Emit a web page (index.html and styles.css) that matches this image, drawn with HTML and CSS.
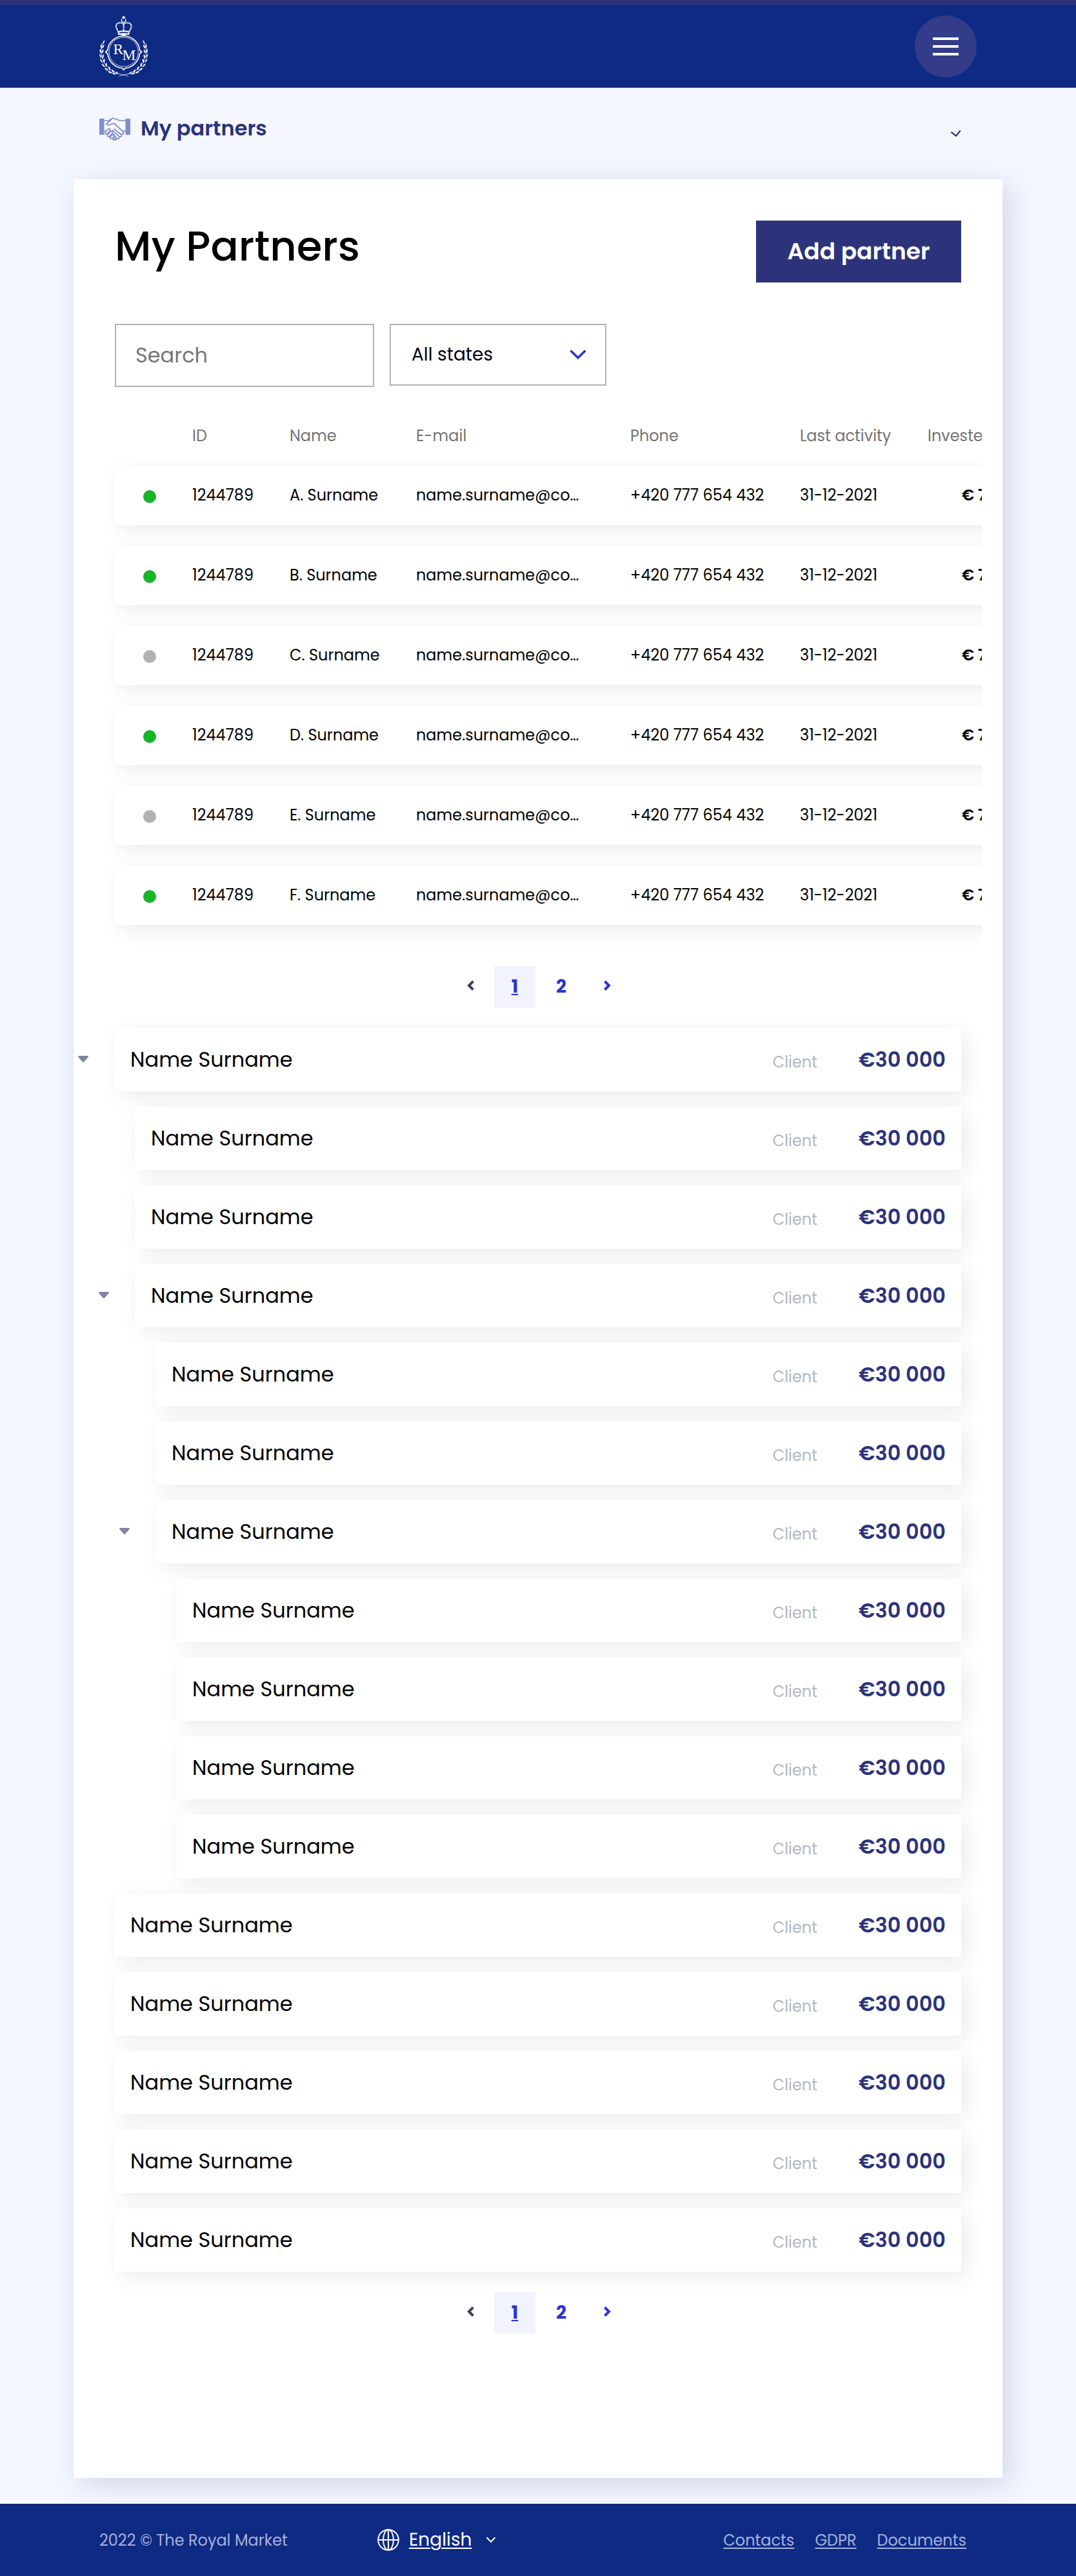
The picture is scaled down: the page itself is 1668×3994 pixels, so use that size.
FILE: index.html
```
<!DOCTYPE html>
<html lang="en">
<head>
<meta charset="utf-8">
<title>My Partners</title>
<link rel="stylesheet" href="styles.css">
</head>
<body>
<svg width="0" height="0" class="defs">
  <symbol id="prev" viewBox="0 0 12 18"><path d="M9.500 2.500 3 9l6.500 6.500" fill="none" stroke="currentColor" stroke-width="4"/></symbol>
  <symbol id="next" viewBox="0 0 12 18"><path d="M2.500 2.500 9 9l-6.500 6.500" fill="none" stroke="currentColor" stroke-width="4"/></symbol>
  <symbol id="caret" viewBox="0 0 16 10"><path d="M1.500 0h13c1.300 0 1.900 1.300 1 2.300L9.200 9.300c-.7.8-1.700.8-2.400 0L.5 2.300C-.4 1.300.2 0 1.500 0z" fill="#8184a0"/></symbol>
</svg>

<header class="header">
  <svg class="logo" viewBox="0 0 76 96" fill="none" stroke="#fff">
    <path d="M37.700 0l1 2h2.200l-1.700 1.500.6 2.200-2.100-1.200-2.100 1.200.6-2.200L34.500 2h2.200z" fill="#fff" stroke="none"/>
    <path d="M34.900 5.500a3.300 3.300 0 1 0 5.600 0" stroke-width="1.200"/>
    <path d="M30 28c-1-6-4.500-7-4-12 .5-5.500 8-6 11.700-2.500C41.400 10 49 10.500 49.500 16c.4 5-3 6-4 12M37.700 13v13" stroke-width="2.200" stroke-dasharray="1.300 .5"/>
    <path d="M29.500 25.500q8.200-2.500 16.400 0M29 29.300q8.700-2.300 17.400 0" stroke-width="2"/>
    <path d="M31 28.500h13.500L37.700 32z" fill="#fff" stroke="none"/>
    <path d="M37.700 31.500C25 32 13.500 42 13 53.500L9.700 56.500 13 59.500c1 12 12 21.500 22 22l2.700 2.700 2.700-2.700c10-.5 21-10 22-22l3.300-3-3.300-3C62 42 50.500 32 37.700 31.500z" stroke-width="1.700"/>
    <circle cx="37.700" cy="56.500" r="22.600" stroke-width=".8"/>
    <g class="monogram"><text x="21.500" y="59.500">R</text><text x="35.500" y="69.300">M</text></g>
    <g id="branch">
      <path d="M6.500 40C1 53 2 66 10 77c5.500 7 14 12 25 14.500l10 2.500" stroke-width=".7"/>
      <g stroke="none" fill="#fff">
        <path d="M8.500 38q-1 5-3.500 6.500Q5 40 8.500 38zM3 44q2 3 0 7.500Q.8 47 3 44zM7.500 45q0 4.500-3.300 6.500Q4 47 7.500 45zM1.200 51.500q2.500 3 1.200 7Q-.6 56 1.200 51.500zM6.500 52.500q.6 4.500-2.800 6.500-.6-4.500 2.800-6.500zM.4 59q3 2.500 2.400 7Q-.4 63.500.4 59zM6.600 60q1.100 4.500-2 7-1.200-4.500 2-7zM1.200 67q3.600 2.200 3.800 6.300Q1.300 71.500 1.200 67zM7.900 66.800q1.700 4.200-1 7.200-2-4.200 1-7.200zM3.600 74.500q4 1.300 5.200 5.500-4.500-1.300-5.200-5.500zM10.600 73q2.300 3.700.3 7.200-2.700-3.400-.3-7.200zM8 81.300q4.300.4 6.300 4.200-4.700.3-6.300-4.200zM14.800 78.500q3 3 1.600 7-3.200-3-1.600-7zM13 86.500q4.500-.7 7.300 2.400-4.500 1.700-7.300-2.400zM19.600 83.200q3.600 2.200 3 6.300-3.700-2-3-6.300zM19.500 90q4-1.700 7.500.6-3.500 2-7.500-.6zM25 86.800q4 1.300 4.500 4.500-3.700-1-4.500-4.500z"/>
      </g>
    </g>
    <use href="#branch" transform="matrix(-1 0 0 1 75.400 0)"/>
  </svg>
  <button class="menu-button" aria-label="Menu"><span></span><span></span><span></span></button>
</header>

<nav class="section-nav">
  <svg class="handshake" viewBox="0 0 48 36" fill="none" stroke="#808fc7" stroke-width="1.700" stroke-linejoin="round" stroke-linecap="round">
    <path d="M0 2h7.500v25H0zM40.500 2H48v25h-7.500z" fill="#808fc7" stroke="none"/>
    <path d="M7 5h7.500L21 1l11 4h9M19 2.800 11 10c1.500 2.500 4 2.300 6 1l5.500-2 14.800 13.500c1.500 2-.8 4.200-2.800 2.700M7 21h3M41 21h-3.500M23 18l11 9c1.600 2-.8 4.300-2.800 2.800L20 20M31 30c1 2-1.500 3.800-3.500 2.500l-6-5M27 33c0 2-2.500 2.500-4 1"/>
    <path d="M9.500 23l4-5c2-1.300 4.300.3 3 2.500l-4 5c-2 1.600-4.300-.3-3-2.500zM13 27l4-5c2-1.400 4.300.2 3 2.500l-4 5c-2 1.500-4.300-.2-3-2.500zM17 30.500l3.300-4c2-1.300 4 .4 3 2.500l-3.300 3.700c-2 1.300-4-.2-3-2.200zM21 33l2-2.300c2-1 3.500.4 2.600 2.100l-1.300 1.700c-1.500 1.300-3.800.2-3.300-1.500z"/>
  </svg>
  <span class="section-name">My partners</span>
  <svg class="section-chevron" viewBox="0 0 17 12"><path d="M2 4.200 9.200 9.700 15.200 2" fill="none" stroke="#2b337b" stroke-width="2.200" stroke-linecap="round"/></svg>
</nav>

<main class="card">
  <div class="card-head">
    <h1>My Partners</h1>
    <button class="add-button">Add partner</button>
  </div>
  <div class="filters">
    <div class="search">Search</div>
    <div class="select"><span>All states</span><svg width="26" height="16" viewBox="0 0 26 16"><path d="M2.500 2.500 13 12.800 23.500 2.500" fill="none" stroke="#2933d3" stroke-width="3.500" stroke-linecap="round"/></svg></div>
  </div>

  <div class="table-scroll">
    <div class="grid table-head"><span></span><span>ID</span><span>Name</span><span>E-mail</span><span>Phone</span><span>Last activity</span><span>Invested</span></div>
    <div class="grid row"><i class="dot"></i><span>1244789</span><span>A. Surname</span><span>name.surname@co…</span><span>+420 777 654 432</span><span>31-12-2021</span><b>€ 7 000</b></div>
    <div class="grid row"><i class="dot"></i><span>1244789</span><span>B. Surname</span><span>name.surname@co…</span><span>+420 777 654 432</span><span>31-12-2021</span><b>€ 7 000</b></div>
    <div class="grid row"><i class="dot off"></i><span>1244789</span><span>C. Surname</span><span>name.surname@co…</span><span>+420 777 654 432</span><span>31-12-2021</span><b>€ 7 000</b></div>
    <div class="grid row"><i class="dot"></i><span>1244789</span><span>D. Surname</span><span>name.surname@co…</span><span>+420 777 654 432</span><span>31-12-2021</span><b>€ 7 000</b></div>
    <div class="grid row"><i class="dot off"></i><span>1244789</span><span>E. Surname</span><span>name.surname@co…</span><span>+420 777 654 432</span><span>31-12-2021</span><b>€ 7 000</b></div>
    <div class="grid row"><i class="dot"></i><span>1244789</span><span>F. Surname</span><span>name.surname@co…</span><span>+420 777 654 432</span><span>31-12-2021</span><b>€ 7 000</b></div>
  </div>

  <div class="pager"><a class="prev"><svg><use href="#prev"/></svg></a><a class="current">1</a><a>2</a><a class="next"><svg><use href="#next"/></svg></a></div>

  <div class="tree">
    <div class="node"><svg class="caret"><use href="#caret"/></svg><span>Name Surname</span><small>Client</small><b>€30 000</b></div>
    <div class="node l1"><span>Name Surname</span><small>Client</small><b>€30 000</b></div>
    <div class="node l1"><span>Name Surname</span><small>Client</small><b>€30 000</b></div>
    <div class="node l1"><svg class="caret"><use href="#caret"/></svg><span>Name Surname</span><small>Client</small><b>€30 000</b></div>
    <div class="node l2"><span>Name Surname</span><small>Client</small><b>€30 000</b></div>
    <div class="node l2"><span>Name Surname</span><small>Client</small><b>€30 000</b></div>
    <div class="node l2"><svg class="caret"><use href="#caret"/></svg><span>Name Surname</span><small>Client</small><b>€30 000</b></div>
    <div class="node l3"><span>Name Surname</span><small>Client</small><b>€30 000</b></div>
    <div class="node l3"><span>Name Surname</span><small>Client</small><b>€30 000</b></div>
    <div class="node l3"><span>Name Surname</span><small>Client</small><b>€30 000</b></div>
    <div class="node l3"><span>Name Surname</span><small>Client</small><b>€30 000</b></div>
    <div class="node"><span>Name Surname</span><small>Client</small><b>€30 000</b></div>
    <div class="node"><span>Name Surname</span><small>Client</small><b>€30 000</b></div>
    <div class="node"><span>Name Surname</span><small>Client</small><b>€30 000</b></div>
    <div class="node"><span>Name Surname</span><small>Client</small><b>€30 000</b></div>
    <div class="node"><span>Name Surname</span><small>Client</small><b>€30 000</b></div>
  </div>

  <div class="pager"><a class="prev"><svg><use href="#prev"/></svg></a><a class="current">1</a><a>2</a><a class="next"><svg><use href="#next"/></svg></a></div>
</main>

<footer class="footer">
  <span class="copyright">2022 © The Royal Market</span>
  <div class="language">
    <svg width="34" height="34" viewBox="0 0 34 34" fill="none" stroke="#fff" stroke-width="2"><circle cx="17" cy="17" r="15.800"/><ellipse cx="17" cy="17" rx="8" ry="15.800"/><path d="M17 1v32M1 17h32"/></svg>
    <a>English</a>
    <svg width="16" height="10" viewBox="0 0 16 10"><path d="M1.500 1.300 8 8l6.500-6.700" fill="none" stroke="#fff" stroke-width="2"/></svg>
  </div>
  <div class="links"><a>Contacts</a><a>GDPR</a><a>Documents</a></div>
</footer>
</body>
</html>
```
FILE: styles.css
```
* { box-sizing: border-box; }

body {
  margin: 0;
  background: #f4f7ff;
  color: #000;
  font-family: Poppins, Inter, "Liberation Sans", sans-serif;
  font-size: 24px;
}

.defs { display: block; }

/* Header */
.header {
  height: 136px;
  border-top: 8px solid #2d337b;
  background: #0f2a83;
  padding: 0 154px;
  display: flex;
  align-items: center;
  justify-content: space-between;
}
.logo { width: 76px; height: 96px; overflow: visible; }
.monogram text { font: 23.500px "Liberation Serif", serif; fill: #fff; stroke: none; }
.menu-button {
  width: 96px;
  height: 96px;
  border: 0;
  border-radius: 50%;
  background: #333c88;
  display: flex;
  flex-direction: column;
  align-items: center;
  justify-content: center;
  gap: 8px;
}
.menu-button span { width: 40px; height: 4px; background: #fff; }

/* Section bar */
.section-nav {
  height: 142px;
  padding: 43px 178px 0 154px;
  display: flex;
  align-items: flex-start;
}
.handshake { width: 48px; height: 36px; margin-top: 3px; }
.section-name {
  flex: 1;
  margin-left: 16px;
  font-size: 32px;
  font-weight: 600;
  line-height: 40px;
  color: #2b337b;
}
.section-chevron { width: 17px; height: 12px; margin-top: 22px; }

/* Card */
.card {
  width: 1440px;
  margin: 0 0 40px 114px;
  padding: 64px 64px 224px;
  background: #fff;
  box-shadow: 10px 10px 40px rgba(43, 51, 110, .17);
}
.card-head {
  display: flex;
  justify-content: space-between;
  align-items: flex-start;
  height: 96px;
  margin-bottom: 64px;
}
h1 {
  margin: 0;
  font-size: 64px;
  font-weight: 500;
  line-height: 80px;
}
.add-button {
  width: 318px;
  height: 96px;
  padding: 0 0 2px;
  border: 0;
  background: #2d337b;
  color: #fff;
  font: inherit;
  font-size: 36px;
  font-weight: 600;
}
.filters { display: flex; align-items: flex-start; gap: 24px; }
.search, .select {
  border: 2px solid #b2b2b2;
  display: flex;
  align-items: center;
}
.search {
  width: 402px;
  height: 98px;
  padding-left: 30px;
  font-size: 32px;
  color: #757575;
}
.select {
  width: 336px;
  height: 96px;
  padding: 0 29px 0 32px;
  justify-content: space-between;
  font-size: 28px;
  color: #000012;
}

/* Partner table, cut off at its right edge */
.table-scroll {
  margin: 0 -32px 0 -64px;
  padding: 55px 0 48px 64px;
  overflow: hidden;
}
.grid {
  display: grid;
  grid-template-columns: 120px 151px 196px 332px 263px 198px 200px;
  align-items: center;
  width: 1560px;
  white-space: nowrap;
}
.table-head { height: 40px; margin-bottom: 27px; color: #737373; }
.row {
  height: 92px;
  padding-bottom: 2px;
  background: #fff;
  box-shadow: 8px 8px 30px rgba(0, 0, 0, .08);
}
.row + .row { margin-top: 32px; }
.row b { padding-left: 53px; font-weight: 600; }
.dot {
  width: 20px;
  height: 20px;
  margin: 6px 0 0 44px;
  border-radius: 50%;
  background: #17b42a;
}
.dot.off { background: #b2b2b2; }

/* Pagination */
.pager {
  display: flex;
  justify-content: center;
  gap: 8px;
  margin: 16px 0 32px;
}
.pager a {
  width: 64px;
  height: 64px;
  display: flex;
  align-items: center;
  justify-content: center;
  font-size: 28px;
  font-weight: 700;
  color: #2933d3;
}
.pager .current {
  background: #f1f3fe;
  text-decoration: underline;
  text-decoration-thickness: 2px;
  text-underline-offset: 2px;
}
.pager svg { width: 12px; height: 18px; margin-bottom: 4px; }
.pager .prev { color: #3c3f61; padding-left: 8px; }
.pager .next { padding-right: 2px; }
.tree + .pager { margin: 32px 0 0; }

/* Partner tree */
.tree { display: flex; flex-direction: column; gap: 24px; }
.node {
  position: relative;
  height: 98px;
  padding: 0 24px;
  display: flex;
  align-items: center;
  background: #fff;
  box-shadow: 8px 8px 30px rgba(0, 0, 0, .08);
}
.node span { flex: 1; font-size: 32px; }
.node small { margin-right: 64px; padding-top: 6px; font-size: 24px; color: #b0b8c0; }
.node b { font-size: 32px; font-weight: 600; color: #2b337b; white-space: nowrap; }
.caret { position: absolute; left: -57px; top: 43px; width: 16px; height: 10px; }
.l1 { margin-left: 32px; }
.l2 { margin-left: 64px; }
.l3 { margin-left: 96px; }

/* Footer */
.footer {
  position: relative;
  height: 112px;
  padding: 0 170px 0 154px;
  background: #0f2a83;
  color: #a7b1dc;
  display: flex;
  align-items: center;
}
.copyright { width: 431px; }
.language { flex: 1; display: flex; align-items: center; color: #fff; font-size: 28px; }
.language a { margin: 0 21px 0 15px; }
.footer a {
  text-decoration: underline;
  text-decoration-thickness: 2px;
  text-underline-offset: 3px;
}
.links { display: flex; gap: 32px; }
```
